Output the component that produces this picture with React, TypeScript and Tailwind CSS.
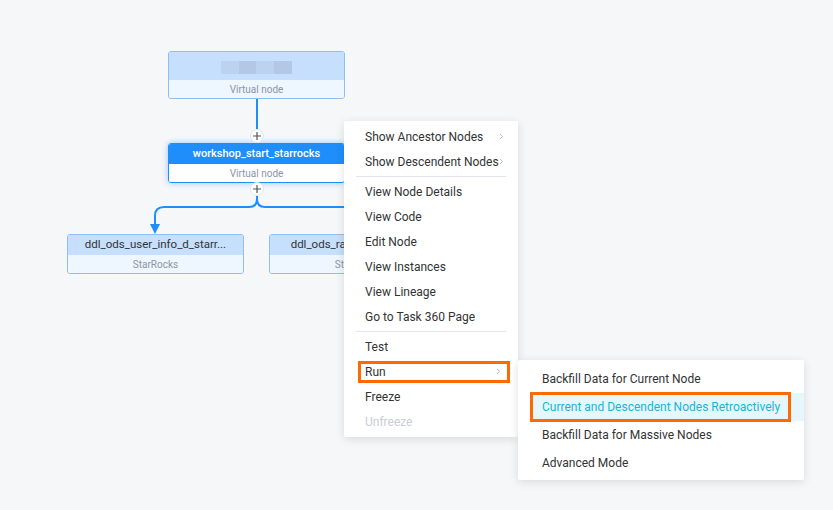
import { ReactNode } from "react";

// Context menu over a DAG canvas
type Item = { label: string; chevron?: boolean; disabled?: boolean };

const topGroup: Item[] = [
  { label: "Show Ancestor Nodes", chevron: true },
  { label: "Show Descendent Nodes", chevron: true },
];
const midGroup: Item[] = [
  { label: "View Node Details" },
  { label: "View Code" },
  { label: "Edit Node" },
  { label: "View Instances" },
  { label: "View Lineage" },
  { label: "Go to Task 360 Page" },
];

const runOptions = [
  "Backfill Data for Current Node",
  "Current and Descendent Nodes Retroactively",
  "Backfill Data for Massive Nodes",
  "Advanced Mode",
];

function Chevron() {
  return (
    <svg width="5" height="7" viewBox="0 0 5 7" className="shrink-0">
      <path d="M1 1 L3.5 3.5 L1 6" fill="none" stroke="#b7bcc8" strokeWidth="1" />
    </svg>
  );
}

function MenuRow({ item }: { item: Item }) {
  return (
    <div
      className={`h-[25px] flex items-center justify-between pl-[21px] pr-[14px] text-[12px] ${
        item.disabled ? "text-[#c9ccd6]" : "text-[#333]"
      }`}
    >
      <span>{item.label}</span>
      {item.chevron && <Chevron />}
    </div>
  );
}

function Divider() {
  return <div className="mx-[12px] my-[2px] h-px bg-[#e3e5ec]" />;
}

function PlusDot({ x, y }: { x: number; y: number }) {
  return (
    <g>
      <circle cx={x} cy={y} r="6.5" fill="#fff" stroke="#e3e6ec" strokeWidth="1" />
      <path d={`M${x - 4} ${y} H${x + 4} M${x} ${y - 4} V${y + 4}`} stroke="#555" strokeWidth="1.2" />
    </g>
  );
}

function NodeCard({
  title,
  sub,
  active,
  children,
}: {
  title?: string;
  sub: string;
  active?: boolean;
  children?: ReactNode;
}) {
  return (
    <div
      className={`w-[177px] rounded-[3px] border overflow-hidden ${
        active
          ? "border-[#1f8efa] shadow-[0_0_6px_rgba(31,142,250,0.45)]"
          : "border-[#8fbdf5]"
      }`}
    >
      <div
        className={`flex items-center justify-center truncate px-2 ${
          active ? "bg-[#1f8efa] text-white font-medium text-[11px]" : "bg-[#c6dffc] text-[#333] text-[11.5px]"
        } ${children ? "h-[28px]" : "h-[20px]"}`}
      >
        {children ?? title}
      </div>
      <div
        className={`h-[18px] flex items-center justify-center text-[10px] text-[#8d95a5] ${
          active ? "bg-white" : "bg-[#eef6ff]"
        }`}
      >
        {sub}
      </div>
    </div>
  );
}

export default function App() {
  return (
    <div
      className="relative w-[833px] h-[510px] overflow-hidden bg-[#f6f7f9]"
      style={{ fontFamily: "Roboto, 'Liberation Sans', sans-serif" }}
    >
      {/* edges */}
      <svg className="absolute inset-0" width="833" height="510">
        <path d="M257 99 V130" stroke="#1f8efa" strokeWidth="2" fill="none" />
        <path
          d="M257 195 V199 Q257 207 249 207 H164 Q155 207 155 216 V226"
          stroke="#1f8efa"
          strokeWidth="2"
          fill="none"
        />
        <path d="M257 199 Q257 207 265 207 H348 Q357 207 357 216 V226" stroke="#1f8efa" strokeWidth="2" fill="none" />
        <path d="M150 224 L160 224 L155 234 Z" fill="#1f8efa" />
      </svg>

      <div className="absolute left-[168px] top-[51px]">
        <NodeCard sub="Virtual node">
          <div className="flex h-[13px] mt-[2px]">
            <div className="w-[18px] bg-[#bcd3f0]" />
            <div className="w-[17px] bg-[#b3c8e4]" />
            <div className="w-[18px] bg-[#bcd3f0]" />
            <div className="w-[18px] bg-[#b3c8e4]" />
          </div>
        </NodeCard>
      </div>
      <div className="absolute left-[168px] top-[143px]">
        <NodeCard title="workshop_start_starrocks" sub="Virtual node" active />
      </div>
      <div className="absolute left-[67px] top-[234px]">
        <NodeCard title="ddl_ods_user_info_d_starr..." sub="StarRocks" />
      </div>
      {/* partly hidden under the context menu */}
      <div className="absolute left-[269px] top-[234px]">
        <NodeCard title="ddl_ods_raw_log_d_starr..." sub="StarRocks" />
      </div>

      <svg className="absolute inset-0 pointer-events-none" width="833" height="510">
        <PlusDot x={257} y={136} />
        <PlusDot x={257} y={189} />
      </svg>

      {/* main context menu */}
      <div className="absolute left-[344px] top-[121px] w-[174px] py-[3px] bg-white rounded-[2px] shadow-[0_2px_10px_rgba(0,0,0,0.12)]">
        {topGroup.map((it) => (
          <MenuRow key={it.label} item={it} />
        ))}
        <Divider />
        {midGroup.map((it) => (
          <MenuRow key={it.label} item={it} />
        ))}
        <Divider />
        <MenuRow item={{ label: "Test" }} />
        <div className="h-[25px] flex items-center pl-[14px] pr-[8px]">
          <div className="flex-1 h-[22px] flex items-center justify-between border-[3px] border-[#ff6a00] pl-[4px] pr-[6px] text-[12px] text-[#333]">
            <span>Run</span>
            <Chevron />
          </div>
        </div>
        <MenuRow item={{ label: "Freeze" }} />
        <MenuRow item={{ label: "Unfreeze", disabled: true }} />
      </div>

      {/* run submenu */}
      <div className="absolute left-[518px] top-[360px] w-[286px] pt-[5px] pb-[3px] bg-white rounded-[2px] shadow-[0_2px_10px_rgba(0,0,0,0.12)]">
        {runOptions.map((label, i) =>
          i === 1 ? (
            <div key={label} className="h-[28px] ml-[12px] flex items-center bg-[#e6f7fc]">
              <div className="w-[261px] h-[30px] flex items-center border-[3px] border-[#ff6a00] pl-[9px] text-[12px] text-[#1bb3d8]">
                {label}
              </div>
            </div>
          ) : (
            <div key={label} className="h-[28px] flex items-center pl-[24px] text-[12px] text-[#333]">
              {label}
            </div>
          )
        )}
      </div>
    </div>
  );
}
